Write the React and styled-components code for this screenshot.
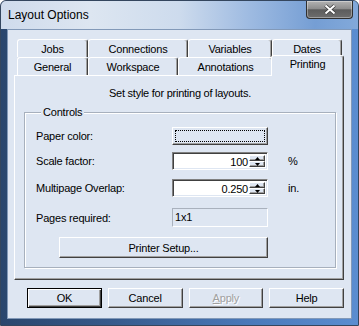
import React from "react";
import styled, { createGlobalStyle, css } from "styled-components";

const FACE = "#dee6f2";

const GlobalStyle = createGlobalStyle`
  html, body {
    margin: 0;
    padding: 0;
    background: #ffffff;
  }
  body {
    font-family: "Liberation Sans", Arial, sans-serif;
    font-size: 11px;
    letter-spacing: -0.2px;
    color: #000;
  }
`;

// raised 3d edge (classic button)
const raised = css`
  box-sizing: border-box;
  border: 1px solid;
  border-color: #ffffff #404040 #404040 #ffffff;
  box-shadow: inset -1px -1px 0 #a0a0a0;
  background: ${FACE};
`;

// sunken edge (edit box)
const sunken = css`
  box-sizing: border-box;
  border: 1px solid;
  border-color: #808080 #ffffff #ffffff #808080;
  box-shadow: inset 1px 1px 0 #404040, inset -1px -1px 0 ${FACE};
`;

// window frame
const Window = styled.div`
  width: 359px;
  height: 326px;
  box-sizing: border-box;
  border: 1px solid #34465e;
  border-radius: 6px 6px 0 0;
  background: linear-gradient(90deg, #2a466d 0%, #36598a 30%, #4a79ba 70%, #5b8dd0 100%);
  display: flex;
  flex-direction: column;
  overflow: hidden;
`;

// title bar
const TitleBar = styled.div`
  height: 28px;
  flex: none;
  display: flex;
  align-items: flex-start;
  padding: 0 5px 0 7px;
  background: linear-gradient(
    90deg,
    #cfdbec 0%,
    #dde6f1 25%,
    #cddbed 50%,
    #9dbae1 70%,
    #759ed4 88%,
    #82a9da 100%
  );
`;

const Title = styled.div`
  font-family: "Liberation Sans", Arial, sans-serif;
  font-size: 12px;
  letter-spacing: 0;
  line-height: 28px;
  color: #000;
`;

const CloseButton = styled.div`
  margin-left: auto;
  width: 47px;
  height: 18px;
  box-sizing: border-box;
  border: 1px solid #2f2f2f;
  border-top: none;
  border-radius: 0 0 4px 4px;
  background: linear-gradient(180deg, #b3b3b3 0%, #8e8e8e 45%, #5c5c5c 52%, #6d6d6d 100%);
  box-shadow: inset 0 0 0 1px rgba(255, 255, 255, 0.35);
  display: flex;
  align-items: center;
  justify-content: center;
`;

// client area
const Client = styled.div`
  flex: 1;
  margin: 0 6px 6px 6px;
  border: 1px solid #8299b8;
  background: ${FACE};
  padding: 9px 7px 0 6px;
  display: flex;
  flex-direction: column;
`;

// tabs
const TabStrip = styled.div`
  height: 36px;
  padding-left: 3px;
  display: flex;
  flex-direction: column;
`;

const TabRow = styled.div`
  height: 18px;
  display: flex;
  align-items: flex-start;
`;

const Tab = styled.div`
  box-sizing: border-box;
  width: ${(p) => p.$w}px;
  height: 18px;
  border: 1px solid;
  border-bottom: none;
  border-color: #ffffff #404040 transparent #ffffff;
  border-radius: 3px 3px 0 0;
  box-shadow: inset -1px 0 0 #a0a0a0;
  background: ${FACE};
  display: flex;
  align-items: center;
  justify-content: center;
  white-space: nowrap;

  ${(p) =>
    p.$selected &&
    css`
      position: relative;
      z-index: 2;
      width: ${p.$w + 4}px;
      height: 21px;
      margin: -2px -2px 0 -2px;
      align-items: flex-start;
      padding-top: 2px;
    `}
`;

const Panel = styled.div`
  box-sizing: border-box;
  width: 330px;
  height: 205px;
  border: 1px solid;
  border-color: #ffffff #404040 #404040 #ffffff;
  box-shadow: inset -1px -1px 0 #a0a0a0;
  padding: 0 7px 0 9px;
  display: flex;
  flex-direction: column;
`;

const Info = styled.div`
  padding-top: 11px;
  line-height: 13px;
  text-align: center;
  letter-spacing: -0.25px;
`;

// group box
const Group = styled.fieldset`
  box-sizing: border-box;
  margin: 6px 0 0 0;
  min-width: 0;
  height: 162px;
  border: 1px solid #a7b0bd;
  box-shadow: inset 1px 1px 0 #ffffff, 1px 1px 0 #ffffff;
  padding: 8px 0 8px 11px;
`;

const Legend = styled.legend`
  margin-left: 5px;
  padding: 0 2px;
  line-height: 13px;
  background: ${FACE};
`;

const FormRow = styled.div`
  display: grid;
  grid-template-columns: 116px 96px auto;
  column-gap: 20px;
  align-items: center;
  height: ${(p) => p.$h}px;
  margin-top: ${(p) => p.$mt || 0}px;
`;

const Caption = styled.span`
  white-space: nowrap;
`;

const Unit = styled.span`
  white-space: nowrap;
`;

const ColorButton = styled.div`
  ${raised};
  height: 18px;
  padding: 2px;
`;

const FocusRect = styled.div`
  height: 100%;
  box-sizing: border-box;
  border: 1px dotted #000;
`;

const SpinField = styled.div`
  ${sunken};
  height: 18px;
  background: #ffffff;
  padding: 2px;
  display: flex;
`;

const SpinValue = styled.div`
  flex: 1;
  text-align: right;
  line-height: 14px;
  padding-right: 1px;
`;

const SpinButtons = styled.div`
  width: 16px;
  display: flex;
  flex-direction: column;
`;

const SpinButton = styled.div`
  ${raised};
  flex: 1;
  display: flex;
  align-items: center;
  justify-content: center;
`;

const ReadOnlyField = styled.div`
  box-sizing: border-box;
  height: 19px;
  border: 1px solid;
  border-color: #a9b1bd #ffffff #ffffff #a9b1bd;
  padding-left: 2px;
  line-height: 17px;
`;

const SetupButton = styled.button`
  ${raised};
  display: block;
  margin: 10px 0 0 23px;
  width: 209px;
  height: 21px;
  padding: 0;
  font-family: "Liberation Sans", Arial, sans-serif;
  font-size: 11px;
  letter-spacing: -0.2px;
  color: #000;
`;

// OK / Cancel / Apply / Help
const ButtonRow = styled.div`
  display: flex;
  gap: 6px;
  margin: 8px 0 0 13px;
`;

const DialogButton = styled.button`
  ${raised};
  width: 75px;
  height: 20px;
  padding: 0;
  font-family: "Liberation Sans", Arial, sans-serif;
  font-size: 11px;
  letter-spacing: -0.2px;
  color: ${(p) => (p.disabled ? "#a0a0a0" : "#000")};
  text-shadow: ${(p) => (p.disabled ? "1px 1px 0 #ffffff" : "none")};

  ${(p) =>
    p.$default &&
    css`
      border-color: #000;
      box-shadow: inset 1px 1px 0 #ffffff, inset -1px -1px 0 #404040, inset -2px -2px 0 #a0a0a0;
    `}
`;

const Arrow = ({ down }) => (
  <svg width="5" height="3" viewBox="0 0 5 3">
    <path d={down ? "M0 0 H5 L2.5 3 Z" : "M0 3 H5 L2.5 0 Z"} fill="#000" />
  </svg>
);

const Spinner = ({ value }) => (
  <SpinField>
    <SpinValue>{value}</SpinValue>
    <SpinButtons>
      <SpinButton>
        <Arrow />
      </SpinButton>
      <SpinButton>
        <Arrow down />
      </SpinButton>
    </SpinButtons>
  </SpinField>
);

const backTabs = [
  { label: "Jobs", w: 71 },
  { label: "Connections", w: 100 },
  { label: "Variables", w: 84 },
  { label: "Dates", w: 70 },
];

const frontTabs = [
  { label: "General", w: 71 },
  { label: "Workspace", w: 90 },
  { label: "Annotations", w: 95 },
  { label: "Printing", w: 69, selected: true },
];

export default function App() {
  return (
    <>
      <GlobalStyle />
      <Window>
        <TitleBar>
          <Title>Layout Options</Title>
          <CloseButton>
            <svg width="14" height="11" viewBox="0 0 14 11">
              <path d="M2.5 1.5 L11.5 9.5 M11.5 1.5 L2.5 9.5" stroke="#3a3a3a" strokeWidth="3.6" />
              <path d="M2.5 1.5 L11.5 9.5 M11.5 1.5 L2.5 9.5" stroke="#ffffff" strokeWidth="2" />
            </svg>
          </CloseButton>
        </TitleBar>

        <Client>
          <TabStrip>
            <TabRow>
              {backTabs.map((t) => (
                <Tab key={t.label} $w={t.w}>
                  {t.label}
                </Tab>
              ))}
            </TabRow>
            <TabRow>
              {frontTabs.map((t) => (
                <Tab key={t.label} $w={t.w} $selected={t.selected}>
                  {t.label}
                </Tab>
              ))}
            </TabRow>
          </TabStrip>

          <Panel>
            <Info>Set style for printing of layouts.</Info>
            <Group>
              <Legend>Controls</Legend>

              <FormRow $h={18}>
                <Caption>Paper color:</Caption>
                <ColorButton>
                  <FocusRect />
                </ColorButton>
              </FormRow>

              <FormRow $h={18} $mt={7}>
                <Caption>Scale factor:</Caption>
                <Spinner value="100" />
                <Unit>%</Unit>
              </FormRow>

              <FormRow $h={18} $mt={9}>
                <Caption>Multipage Overlap:</Caption>
                <Spinner value="0.250" />
                <Unit>in.</Unit>
              </FormRow>

              <FormRow $h={19} $mt={11}>
                <Caption>Pages required:</Caption>
                <ReadOnlyField>1x1</ReadOnlyField>
              </FormRow>

              <SetupButton>Printer Setup...</SetupButton>
            </Group>
          </Panel>

          <ButtonRow>
            <DialogButton $default>OK</DialogButton>
            <DialogButton>Cancel</DialogButton>
            <DialogButton disabled>
              <u>A</u>pply
            </DialogButton>
            <DialogButton>Help</DialogButton>
          </ButtonRow>
        </Client>
      </Window>
    </>
  );
}
